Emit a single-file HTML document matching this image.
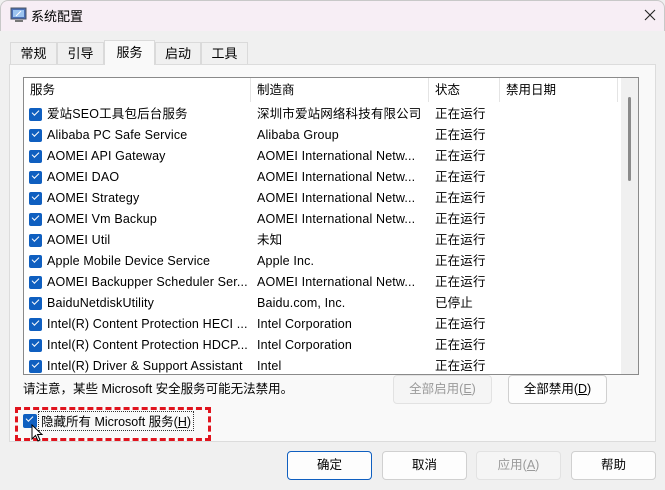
<!DOCTYPE html>
<html><head><meta charset="utf-8"><style>
*{margin:0;padding:0;box-sizing:border-box}
body{width:665px;height:490px;overflow:hidden;background:#f0f0f0;font-family:"Liberation Sans","Noto Sans CJK SC",sans-serif;font-size:12.5px;color:#000;position:relative}
.abs{position:absolute}
.title{left:0;top:0;width:665px;height:31px;background:#f7eef5;border:1px solid #c8c8c8;border-bottom:none;border-radius:8px 8px 0 0}
.tab{position:absolute;top:42px;height:22px;border:1px solid #dadada;border-bottom:none;background:#f0f0f0;text-align:center;line-height:21px;font-size:13px}
.panel{left:9px;top:64px;width:647px;height:378px;background:#f9f9f9;border:1px solid #dcdcdc}
.list{left:23px;top:77px;width:616px;height:298px;background:#fff;border:1px solid #8a8a8a;overflow:hidden}
.hdr{position:absolute;top:0;height:24px;line-height:24px;font-size:12.5px;padding-left:6px;border-right:1px solid #e4e4e4}
.row{position:absolute;left:0;height:21px;line-height:21px;white-space:nowrap;font-size:12.5px;letter-spacing:0.15px}
.cb{position:absolute;left:5px;top:4px;width:13px;height:13px;background:#0f5fc0;border-radius:2px}
.cb:after{content:"";position:absolute;left:3px;top:2px;width:6px;height:3px;border-left:1.3px solid #fff;border-bottom:1.3px solid #fff;transform:rotate(-45deg)}
.c{position:absolute;top:0}
.btn{position:absolute;height:29px;background:#fdfdfd;border:1px solid #d0d0d0;border-radius:4px;text-align:center;line-height:27px;font-size:12.5px}
.dis{color:#9a9a9a;background:#f5f5f5;border-color:#e2e2e2}
u{text-decoration:underline}
</style></head><body>
<div class="abs title"></div>
<svg class="abs" style="left:10px;top:7px" width="18" height="17" viewBox="0 0 18 17"><rect x="1" y="1" width="15" height="11" fill="#4a6fb5" stroke="#4c5563"/><rect x="3" y="3" width="11" height="7" fill="#9cc4ef"/><path d="M6 9 L11 4" stroke="#fff"/><rect x="5" y="13" width="8" height="2" fill="#777"/></svg>
<div class="abs" style="left:31px;top:6px;font-size:13px">系统配置</div>
<svg class="abs" style="left:263px;top:0" width="0" height="0"></svg>
<svg class="abs" style="left:644px;top:9px" width="12" height="12" viewBox="0 0 12 12"><path d="M1 1 L11 11 M11 1 L1 11" stroke="#222" stroke-width="1.1"/></svg>
<div class="abs panel"></div>
<div class="tab" style="left:10px;width:47px">常规</div>
<div class="tab" style="left:57px;width:47px">引导</div>
<div class="tab" style="left:104px;top:40px;height:25px;width:51px;background:#f9f9f9;line-height:24px;z-index:2">服务</div>
<div class="tab" style="left:155px;width:46px">启动</div>
<div class="tab" style="left:201px;width:47px">工具</div>
<div class="abs list">
<div class="hdr" style="left:0;width:227px">服务</div>
<div class="hdr" style="left:227px;width:178px">制造商</div>
<div class="hdr" style="left:405px;width:71px">状态</div>
<div class="hdr" style="left:476px;width:118px">禁用日期</div>
<div style="position:absolute;left:597px;top:0;width:17px;height:298px;background:#f0f0f0"></div>
<div style="position:absolute;left:604px;top:19px;width:3px;height:84px;background:#8a8a8a;border-radius:2px"></div>
<div id="rows"></div>
</div>
<div class="abs" style="left:23px;top:378px;font-size:12.5px">请注意，某些 Microsoft 安全服务可能无法禁用。</div>
<div class="btn dis" style="left:393px;top:375px;width:99px">全部启用(<u>E</u>)</div>
<div class="btn" style="left:508px;top:375px;width:99px">全部禁用(<u>D</u>)</div>
<div class="abs" style="left:15px;top:407px;width:196px;height:34px;border:3px dashed #e0141e"></div>
<div class="abs cb" style="left:23px;top:414px;width:14px;height:14px"></div>
<div class="abs" style="left:38px;top:411px;height:20px;line-height:20px;border:1px dotted #333;padding:0 2px;font-size:12.5px">隐藏所有 Microsoft 服务(<u>H</u>)</div>
<svg class="abs" style="left:31px;top:424px" width="14" height="20" viewBox="0 0 14 20"><path d="M1 1 L1 15 L4.5 11.5 L7 17 L9 16 L6.5 10.5 L11 10.5 Z" fill="#fff" stroke="#000"/></svg>
<div class="btn" style="left:287px;top:451px;width:85px;border:1px solid #0f5fc0">确定</div>
<div class="btn" style="left:382px;top:451px;width:85px">取消</div>
<div class="btn dis" style="left:476px;top:451px;width:85px">应用(<u>A</u>)</div>
<div class="btn" style="left:571px;top:451px;width:85px">帮助</div>
<script>
var d=[["爱站SEO工具包后台服务","深圳市爱站网络科技有限公司","正在运行"],["Alibaba PC Safe Service","Alibaba Group","正在运行"],["AOMEI API Gateway","AOMEI International Netw...","正在运行"],["AOMEI DAO","AOMEI International Netw...","正在运行"],["AOMEI Strategy","AOMEI International Netw...","正在运行"],["AOMEI Vm Backup","AOMEI International Netw...","正在运行"],["AOMEI Util","未知","正在运行"],["Apple Mobile Device Service","Apple Inc.","正在运行"],["AOMEI Backupper Scheduler Ser...","AOMEI International Netw...","正在运行"],["BaiduNetdiskUtility","Baidu.com, Inc.","已停止"],["Intel(R) Content Protection HECI ...","Intel Corporation","正在运行"],["Intel(R) Content Protection HDCP...","Intel Corporation","正在运行"],["Intel(R) Driver & Support Assistant","Intel","正在运行"]];
var h="";d.forEach(function(r,i){h+='<div class="row" style="top:'+(26+i*21)+'px;width:596px"><div class="cb"></div><div class="c" style="left:23px">'+r[0].replace(/&/g,"&amp;")+'</div><div class="c" style="left:233px">'+r[1]+'</div><div class="c" style="left:411px">'+r[2]+'</div></div>'});
document.getElementById("rows").innerHTML=h;
</script>
</body></html>
